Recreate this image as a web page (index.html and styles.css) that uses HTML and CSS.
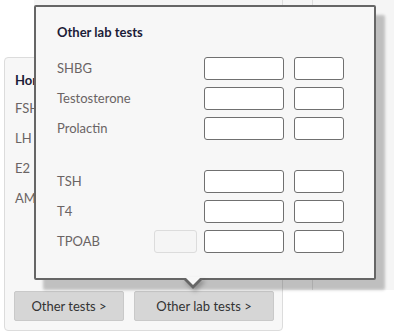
FILE: index.html
```html
<!DOCTYPE html>
<html>
<head>
<meta charset="utf-8">
<link rel="stylesheet" href="styles.css">
</head>
<body>
<div class="backdrop"><span class="col-line col-line-a"></span><span class="col-line col-line-b"></span></div>
<div class="card">
  <div class="card-title">Hormones</div>
  <div class="card-row">FSH</div>
  <div class="card-row">LH</div>
  <div class="card-row">E2</div>
  <div class="card-row">AMH</div>
  <div class="card-actions">
    <button class="btn btn-a">Other tests &gt;</button>
    <button class="btn btn-b">Other lab tests &gt;</button>
  </div>
</div>
<div class="popup">
  <div class="popup-title">Other lab tests</div>
  <div class="grid">
    <div class="lbl">SHBG</div><div></div><div class="inp inp-wide"></div><div class="inp inp-narrow"></div>
    <div class="lbl">Testosterone</div><div></div><div class="inp inp-wide"></div><div class="inp inp-narrow"></div>
    <div class="lbl">Prolactin</div><div></div><div class="inp inp-wide"></div><div class="inp inp-narrow"></div>
    <div class="spacer"></div>
    <div class="lbl">TSH</div><div></div><div class="inp inp-wide"></div><div class="inp inp-narrow"></div>
    <div class="lbl">T4</div><div></div><div class="inp inp-wide"></div><div class="inp inp-narrow"></div>
    <div class="lbl">TPOAB</div><div class="inp inp-off"></div><div class="inp inp-wide"></div><div class="inp inp-narrow"></div>
  </div>
  <div class="arrow"></div>
</div>
</body>
</html>
```
FILE: styles.css
```css
html, body {
  margin: 0;
  padding: 0;
}
body {
  width: 394px;
  height: 334px;
  overflow: hidden;
  position: relative;
  background: #ffffff;
  font-family: Lato, "Open Sans", sans-serif;
  font-size: 13px;
  color: #666;
}
.backdrop {
  position: absolute;
  left: 34px;
  top: 0;
  right: 0;
  height: 290px;
  background: #f5f5f5;
}
.col-line {
  position: absolute;
  top: 0;
  bottom: 0;
  width: 1px;
  background: #dddddd;
}
.col-line-a { left: 248px; }
.col-line-b { left: 278px; }
.card {
  position: relative;
  margin: 57px 0 0 4px;
  width: 279px;
  height: 274px;
  box-sizing: border-box;
  border: 1px solid #dcdcdc;
  border-radius: 4px;
  background: #f7f7f7;
  display: flex;
  flex-direction: column;
  padding: 13px 8px 9px 10px;
}
.card-title {
  font-weight: 700;
  color: #1c1c38;
  font-size: 13px;
  line-height: 18px;
  margin-bottom: 4px;
  white-space: nowrap;
}
.card-row {
  line-height: 30px;
  height: 30px;
  font-size: 13px;
  color: #6a6464;
}
.card-actions {
  margin-top: auto;
  display: flex;
  gap: 10px;
  margin-left: -1px;
}
.btn {
  height: 30px;
  box-sizing: border-box;
  border: 1px solid #c9c9c9;
  border-radius: 2px;
  background: #d6d6d6;
  font-family: inherit;
  font-size: 13px;
  color: #333;
  padding: 0;
}
.btn-a { width: 110px; }
.btn-b { width: 140px; }
.popup {
  position: absolute;
  left: 34px;
  top: 5px;
  width: 342px;
  height: 275px;
  box-sizing: border-box;
  border: 2px solid #666666;
  border-radius: 2px;
  background: #f7f7f7;
  box-shadow: 9px 10px 3px rgba(0, 0, 0, 0.22);
  padding: 16px 0 0 21px;
}
.popup-title {
  font-weight: 700;
  color: #1c1c38;
  font-size: 13px;
  line-height: 18px;
  margin-bottom: 16px;
}
.grid {
  display: grid;
  grid-template-columns: 97px 50px 90px 50px;
  grid-template-rows: 23px 23px 23px 16px 23px 23px 23px;
  row-gap: 7px;
  align-items: center;
}
.spacer {
  grid-column: 1 / -1;
}
.lbl {
  font-size: 13px;
  color: #6a6464;
  line-height: 23px;
}
.inp {
  height: 23px;
  box-sizing: border-box;
  border: 1px solid #707070;
  border-radius: 3px;
  background: #fff;
}
.inp-wide { width: 80px; }
.inp-narrow { width: 50px; }
.inp-off {
  width: 43px;
  border-color: #dcdcdc;
  background: #f5f5f5;
}
.arrow {
  position: absolute;
  left: 146px;
  top: 100%;
  width: 0;
  height: 0;
  filter: drop-shadow(2px 3px 2px rgba(0,0,0,0.25));
}
.arrow::before {
  content: "";
  position: absolute;
  left: 0;
  top: 0;
  border-left: 11px solid transparent;
  border-right: 11px solid transparent;
  border-top: 11px solid #666666;
}
.arrow::after {
  content: "";
  position: absolute;
  left: 3px;
  top: -1px;
  border-left: 8px solid transparent;
  border-right: 8px solid transparent;
  border-top: 8px solid #f7f7f7;
}
```
